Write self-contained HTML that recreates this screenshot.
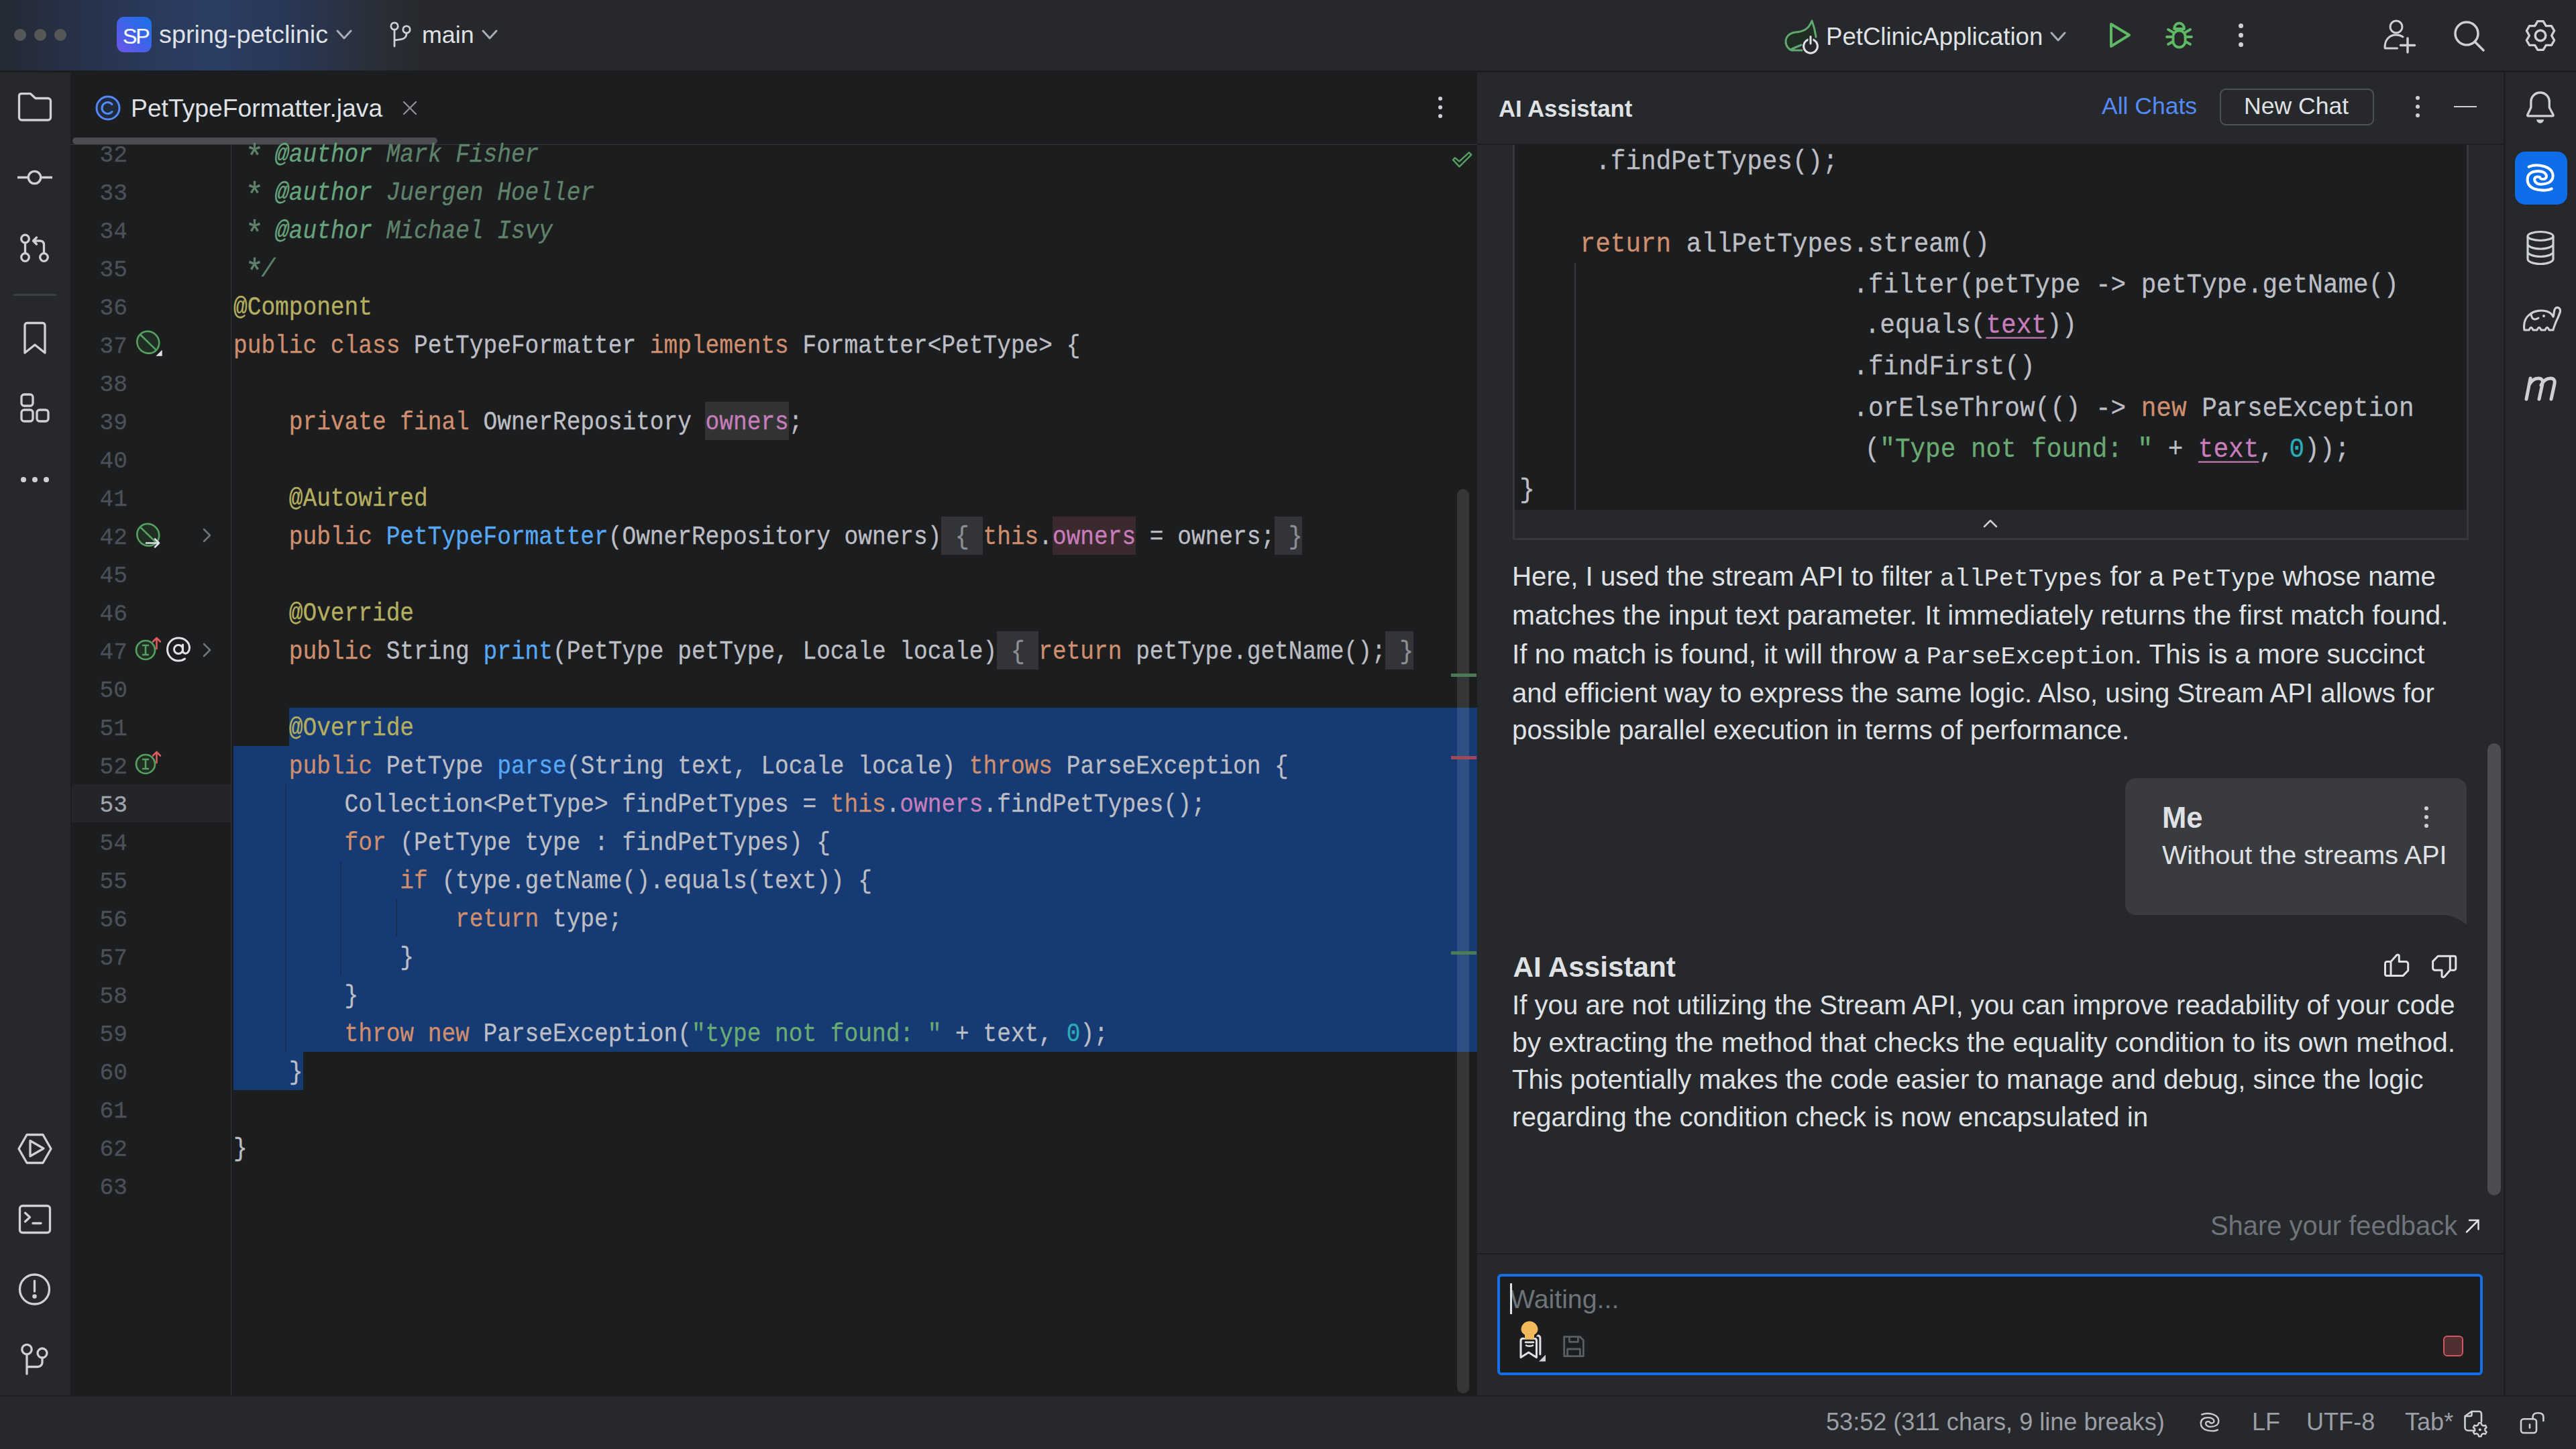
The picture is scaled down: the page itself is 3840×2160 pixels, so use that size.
<!DOCTYPE html><html><head><meta charset="utf-8"><style>html,body{margin:0;padding:0;}body{width:3840px;height:2160px;overflow:hidden;position:relative;background:#1C1D1F;}</style></head><body>
<div style="position:absolute;left:0px;top:0px;width:3840px;height:105px;background:#27282B;"></div>
<div style="position:absolute;left:0;top:0;width:700px;height:105px;background:linear-gradient(90deg, #242933 0px, #27324A 120px, #2A3B5E 250px, #2B3D62 330px, #293756 430px, #2A303C 540px, rgba(43,45,48,0) 640px);"></div>
<div style="position:absolute;left:0px;top:105px;width:3840px;height:3px;background:#1C1D1F;"></div>
<div style="position:absolute;left:21px;top:43px;width:18px;height:18px;border-radius:9px;background:#565758"></div>
<div style="position:absolute;left:51px;top:43px;width:18px;height:18px;border-radius:9px;background:#565758"></div>
<div style="position:absolute;left:81px;top:43px;width:18px;height:18px;border-radius:9px;background:#565758"></div>
<div style="position:absolute;left:174px;top:25px;width:52px;height:53px;border-radius:11px;background:linear-gradient(45deg,#6E55E6 0%,#3F63EA 50%,#1A72E8 100%);"></div>
<div style="position:absolute;left:183.00px;top:37.54px;font-family:'Liberation Sans', sans-serif;font-size:32.2px;line-height:32.2px;color:#FFFFFF;font-weight:400;white-space:pre;letter-spacing:-2.2px;-webkit-text-stroke:0.2px #fff;">SP</div>
<div style="position:absolute;left:237.00px;top:33.19px;font-family:'Liberation Sans', sans-serif;font-size:37.8px;line-height:37.8px;color:#DFE1E5;font-weight:400;white-space:pre;">spring-petclinic</div>
<svg style="position:absolute;left:500.0px;top:42.5px;" width="26" height="17" viewBox="0 0 26 17" fill="none"><polyline points="3,3 13.0,14 23,3" stroke="#A8ADB5" stroke-width="3" stroke-linecap="round" stroke-linejoin="round"/></svg>
<svg style="position:absolute;left:717.0px;top:42.5px;" width="26" height="17" viewBox="0 0 26 17" fill="none"><polyline points="3,3 13.0,14 23,3" stroke="#A8ADB5" stroke-width="3" stroke-linecap="round" stroke-linejoin="round"/></svg>
<svg style="position:absolute;left:580px;top:31px;" width="36" height="42" viewBox="0 0 36 42" fill="none"><circle cx="8" cy="8" r="5.2" stroke="#CED0D6" stroke-width="2.8"/><circle cx="26" cy="13" r="5.2" stroke="#CED0D6" stroke-width="2.8"/><path d="M8 13.5 V38 M26 18.5 C26 27 20 28 8 29" stroke="#CED0D6" stroke-width="2.8" stroke-linecap="round"/></svg>
<div style="position:absolute;left:629.00px;top:34.89px;font-family:'Liberation Sans', sans-serif;font-size:35.8px;line-height:35.8px;color:#DFE1E5;font-weight:400;white-space:pre;">main</div>
<svg style="position:absolute;left:2650px;top:20px;" width="70" height="70" viewBox="0 0 70 70" fill="none"><path d="M51 11 C46 24 38 27 27 28 C17 29 12 35 12 42 C12 49 17 54 21 55 L36 55 L22 51 L35 46 L51 40 C54 38 56 36 57 35 C56 27 54 19 51 11 Z" fill="#1F2D22"/><path d="M51 11 C46 24 38 27 27 28 C17 29 12 35 12 42 C12 49 17 54 21 55 L36 55 M21 53 L35 47 M51 11 C54 19 56 27 57 35" stroke="#5FA870" stroke-width="3" stroke-linecap="round" stroke-linejoin="round"/><circle cx="49" cy="48.8" r="10.4" stroke="#DFE1E5" stroke-width="3"/><path d="M49 34 V45" stroke="#27282B" stroke-width="7"/><path d="M49 34.5 V45" stroke="#DFE1E5" stroke-width="3" stroke-linecap="round"/></svg>
<div style="position:absolute;left:2722.00px;top:36.51px;font-family:'Liberation Sans', sans-serif;font-size:36.6px;line-height:36.6px;color:#DFE1E5;font-weight:400;white-space:pre;">PetClinicApplication</div>
<svg style="position:absolute;left:3055.0px;top:45.5px;" width="26" height="17" viewBox="0 0 26 17" fill="none"><polyline points="3,3 13.0,14 23,3" stroke="#A8ADB5" stroke-width="3" stroke-linecap="round" stroke-linejoin="round"/></svg>
<svg style="position:absolute;left:3130px;top:20px;" width="60" height="64" viewBox="0 0 60 64" fill="none"><path d="M17 16 L44 32.3 L17 49 Z" stroke="#5FB865" stroke-width="4" stroke-linejoin="round"/></svg>
<svg style="position:absolute;left:3220px;top:20px;" width="60" height="64" viewBox="0 0 60 64" fill="none"><path d="M21 23 C21 18 24.5 14.5 28.5 14.5 C32.5 14.5 36 18 36 23 Z" stroke="#5FB865" stroke-width="3.8" stroke-linejoin="round"/><rect x="19.5" y="25.5" width="18" height="25" rx="9" stroke="#5FB865" stroke-width="3.8"/><path d="M12 24 L19 28 M10 35 H18 M12 46 L19 42 M45 24 L38 28 M47 35 H39 M45 46 L38 42" stroke="#5FB865" stroke-width="3.8" stroke-linecap="round"/></svg>
<div style="position:absolute;left:3336.5px;top:34.5px;width:7.0px;height:7.0px;border-radius:3.5px;background:#CED0D6"></div>
<div style="position:absolute;left:3336.5px;top:48.5px;width:7.0px;height:7.0px;border-radius:3.5px;background:#CED0D6"></div>
<div style="position:absolute;left:3336.5px;top:63.0px;width:7.0px;height:7.0px;border-radius:3.5px;background:#CED0D6"></div>
<svg style="position:absolute;left:3552px;top:27px;" width="52" height="56" viewBox="0 0 52 56" fill="none"><circle cx="20" cy="13" r="9" stroke="#CED0D6" stroke-width="3"/><path d="M3 44 C3 32 10 25 20 25 C24 25 27 26 30 28" stroke="#CED0D6" stroke-width="3" stroke-linecap="round"/><path d="M3.5 45 H21.5" stroke="#CED0D6" stroke-width="3" stroke-linecap="round"/><path d="M37 30 V51 M26.5 40.6 H47.5" stroke="#CED0D6" stroke-width="3.5" stroke-linecap="round"/></svg>
<svg style="position:absolute;left:3656px;top:29px;" width="52" height="52" viewBox="0 0 52 52" fill="none"><circle cx="21" cy="21" r="17" stroke="#CED0D6" stroke-width="3.5"/><path d="M33 33 L46 46" stroke="#CED0D6" stroke-width="3.5" stroke-linecap="round"/></svg>
<svg style="position:absolute;left:3761.6px;top:27.8px;" width="50" height="50" viewBox="0 0 50 50" fill="none"><path d="M16.70 10.62 L20.84 3.60 L29.16 3.60 L33.30 10.62 L41.45 10.70 L45.61 17.90 L41.60 25.00 L45.61 32.10 L41.45 39.30 L33.30 39.38 L29.16 46.40 L20.84 46.40 L16.70 39.38 L8.55 39.30 L4.39 32.10 L8.40 25.00 L4.39 17.90 L8.55 10.70 Z" stroke="#CED0D6" stroke-width="3.3" stroke-linejoin="round"/><circle cx="25" cy="25" r="7.8" stroke="#CED0D6" stroke-width="3.5"/></svg>
<div style="position:absolute;left:0px;top:108px;width:105px;height:1972px;background:#27282B;"></div>
<div style="position:absolute;left:3732px;top:108px;width:3px;height:1972px;background:#1C1D1F;"></div>
<div style="position:absolute;left:3735px;top:108px;width:105px;height:1972px;background:#27282B;"></div>
<div style="position:absolute;left:0px;top:2080px;width:3840px;height:2px;background:#1C1D1F;"></div>
<div style="position:absolute;left:0px;top:2082px;width:3840px;height:78px;background:#27282B;"></div>
<div style="position:absolute;left:105px;top:108px;width:2097px;height:1972px;background:#1C1D1F;"></div>
<svg style="position:absolute;left:140px;top:140px;" width="42" height="42" viewBox="0 0 42 42" fill="none"><circle cx="21" cy="21" r="17" stroke="#548AF7" stroke-width="3" fill="#1F2A3D"/><path d="M27 15.5 A8.5 8.5 0 1 0 27 26.5" stroke="#548AF7" stroke-width="3" stroke-linecap="round"/></svg>
<div style="position:absolute;left:195.00px;top:143.02px;font-family:'Liberation Sans', sans-serif;font-size:37.3px;line-height:37.3px;color:#DFE1E5;font-weight:400;white-space:pre;">PetTypeFormatter.java</div>
<svg style="position:absolute;left:598px;top:148px;" width="26" height="26" viewBox="0 0 26 26" fill="none"><path d="M4 4 L22 22 M22 4 L4 22" stroke="#8C8F94" stroke-width="2.4" stroke-linecap="round"/></svg>
<div style="position:absolute;left:2143.7px;top:143.7px;width:6.6px;height:6.6px;border-radius:3.3px;background:#CED0D6"></div>
<div style="position:absolute;left:2143.7px;top:156.7px;width:6.6px;height:6.6px;border-radius:3.3px;background:#CED0D6"></div>
<div style="position:absolute;left:2143.7px;top:169.7px;width:6.6px;height:6.6px;border-radius:3.3px;background:#CED0D6"></div>
<div style="position:absolute;left:105px;top:215px;width:2097px;height:1px;background:#34363B;"></div>
<div style="position:absolute;left:108px;top:205px;width:544px;height:10px;border-radius:5px;background:#4A4C51"></div>
<svg style="position:absolute;left:2140px;top:210px;" width="80" height="50" viewBox="0 0 80 50" fill="none"><path d="M28.8 25.2 L35.4 30.7 L49.9 17.3 L53.3 20.6 L35.5 38.3 L26 28.3 Z" stroke="#55A060" stroke-width="2.4" stroke-linejoin="round"/></svg>
<div style="position:absolute;left:344px;top:216px;width:1px;height:1864px;background:#313337;"></div>
<div style="position:absolute;left:107px;top:1168.5px;width:237px;height:57px;background:#242529;"></div>
<div style="position:absolute;left:430.76px;top:1054.5px;width:1771.24px;height:57px;background:#153A74;"></div>
<div style="position:absolute;left:348px;top:1111.5px;width:1854px;height:456px;background:#153A74;"></div>
<div style="position:absolute;left:348px;top:1567.5px;width:103.5px;height:57px;background:#153A74;"></div>
<div style="position:absolute;left:425px;top:1168.5px;width:2px;height:399px;background:#1A2F57;"></div>
<div style="position:absolute;left:507px;top:1282.5px;width:2px;height:171px;background:#1A2F57;"></div>
<div style="position:absolute;left:590px;top:1339.5px;width:2px;height:57px;background:#1A2F57;"></div>
<div style="position:absolute;left:1403.19px;top:769.5px;width:62.07000000000001px;height:57px;background:#333438;"></div>
<div style="position:absolute;left:1899.75px;top:769.5px;width:41.38px;height:57px;background:#333438;"></div>
<div style="position:absolute;left:1568.71px;top:769.5px;width:124.14000000000001px;height:57px;background:#3A2A2E;"></div>
<div style="position:absolute;left:1051.46px;top:598.5px;width:124.14000000000001px;height:57px;background:#323434;"></div>
<div style="position:absolute;left:1485.95px;top:940.5px;width:62.07000000000001px;height:57px;background:#333438;"></div>
<div style="position:absolute;left:2065.2700000000004px;top:940.5px;width:41.38px;height:57px;background:#333438;"></div>
<div style="position:absolute;left:148.62px;top:214.88px;font-family:'Liberation Mono', monospace;font-size:34.49px;line-height:34.49px;color:#4B5059;font-weight:400;white-space:pre;-webkit-text-stroke:0.3px;">32</div>
<div style="position:absolute;left:148.62px;top:271.88px;font-family:'Liberation Mono', monospace;font-size:34.49px;line-height:34.49px;color:#4B5059;font-weight:400;white-space:pre;-webkit-text-stroke:0.3px;">33</div>
<div style="position:absolute;left:148.62px;top:328.88px;font-family:'Liberation Mono', monospace;font-size:34.49px;line-height:34.49px;color:#4B5059;font-weight:400;white-space:pre;-webkit-text-stroke:0.3px;">34</div>
<div style="position:absolute;left:148.62px;top:385.88px;font-family:'Liberation Mono', monospace;font-size:34.49px;line-height:34.49px;color:#4B5059;font-weight:400;white-space:pre;-webkit-text-stroke:0.3px;">35</div>
<div style="position:absolute;left:148.62px;top:442.88px;font-family:'Liberation Mono', monospace;font-size:34.49px;line-height:34.49px;color:#4B5059;font-weight:400;white-space:pre;-webkit-text-stroke:0.3px;">36</div>
<div style="position:absolute;left:148.62px;top:499.88px;font-family:'Liberation Mono', monospace;font-size:34.49px;line-height:34.49px;color:#4B5059;font-weight:400;white-space:pre;-webkit-text-stroke:0.3px;">37</div>
<div style="position:absolute;left:148.62px;top:556.88px;font-family:'Liberation Mono', monospace;font-size:34.49px;line-height:34.49px;color:#4B5059;font-weight:400;white-space:pre;-webkit-text-stroke:0.3px;">38</div>
<div style="position:absolute;left:148.62px;top:613.88px;font-family:'Liberation Mono', monospace;font-size:34.49px;line-height:34.49px;color:#4B5059;font-weight:400;white-space:pre;-webkit-text-stroke:0.3px;">39</div>
<div style="position:absolute;left:148.62px;top:670.88px;font-family:'Liberation Mono', monospace;font-size:34.49px;line-height:34.49px;color:#4B5059;font-weight:400;white-space:pre;-webkit-text-stroke:0.3px;">40</div>
<div style="position:absolute;left:148.62px;top:727.88px;font-family:'Liberation Mono', monospace;font-size:34.49px;line-height:34.49px;color:#4B5059;font-weight:400;white-space:pre;-webkit-text-stroke:0.3px;">41</div>
<div style="position:absolute;left:148.62px;top:784.88px;font-family:'Liberation Mono', monospace;font-size:34.49px;line-height:34.49px;color:#4B5059;font-weight:400;white-space:pre;-webkit-text-stroke:0.3px;">42</div>
<div style="position:absolute;left:148.62px;top:841.88px;font-family:'Liberation Mono', monospace;font-size:34.49px;line-height:34.49px;color:#4B5059;font-weight:400;white-space:pre;-webkit-text-stroke:0.3px;">45</div>
<div style="position:absolute;left:148.62px;top:898.88px;font-family:'Liberation Mono', monospace;font-size:34.49px;line-height:34.49px;color:#4B5059;font-weight:400;white-space:pre;-webkit-text-stroke:0.3px;">46</div>
<div style="position:absolute;left:148.62px;top:955.88px;font-family:'Liberation Mono', monospace;font-size:34.49px;line-height:34.49px;color:#4B5059;font-weight:400;white-space:pre;-webkit-text-stroke:0.3px;">47</div>
<div style="position:absolute;left:148.62px;top:1012.88px;font-family:'Liberation Mono', monospace;font-size:34.49px;line-height:34.49px;color:#4B5059;font-weight:400;white-space:pre;-webkit-text-stroke:0.3px;">50</div>
<div style="position:absolute;left:148.62px;top:1069.88px;font-family:'Liberation Mono', monospace;font-size:34.49px;line-height:34.49px;color:#4B5059;font-weight:400;white-space:pre;-webkit-text-stroke:0.3px;">51</div>
<div style="position:absolute;left:148.62px;top:1126.88px;font-family:'Liberation Mono', monospace;font-size:34.49px;line-height:34.49px;color:#4B5059;font-weight:400;white-space:pre;-webkit-text-stroke:0.3px;">52</div>
<div style="position:absolute;left:148.62px;top:1183.88px;font-family:'Liberation Mono', monospace;font-size:34.49px;line-height:34.49px;color:#A1A3AB;font-weight:400;white-space:pre;-webkit-text-stroke:0.3px;">53</div>
<div style="position:absolute;left:148.62px;top:1240.88px;font-family:'Liberation Mono', monospace;font-size:34.49px;line-height:34.49px;color:#4B5059;font-weight:400;white-space:pre;-webkit-text-stroke:0.3px;">54</div>
<div style="position:absolute;left:148.62px;top:1297.88px;font-family:'Liberation Mono', monospace;font-size:34.49px;line-height:34.49px;color:#4B5059;font-weight:400;white-space:pre;-webkit-text-stroke:0.3px;">55</div>
<div style="position:absolute;left:148.62px;top:1354.88px;font-family:'Liberation Mono', monospace;font-size:34.49px;line-height:34.49px;color:#4B5059;font-weight:400;white-space:pre;-webkit-text-stroke:0.3px;">56</div>
<div style="position:absolute;left:148.62px;top:1411.88px;font-family:'Liberation Mono', monospace;font-size:34.49px;line-height:34.49px;color:#4B5059;font-weight:400;white-space:pre;-webkit-text-stroke:0.3px;">57</div>
<div style="position:absolute;left:148.62px;top:1468.88px;font-family:'Liberation Mono', monospace;font-size:34.49px;line-height:34.49px;color:#4B5059;font-weight:400;white-space:pre;-webkit-text-stroke:0.3px;">58</div>
<div style="position:absolute;left:148.62px;top:1525.88px;font-family:'Liberation Mono', monospace;font-size:34.49px;line-height:34.49px;color:#4B5059;font-weight:400;white-space:pre;-webkit-text-stroke:0.3px;">59</div>
<div style="position:absolute;left:148.62px;top:1582.88px;font-family:'Liberation Mono', monospace;font-size:34.49px;line-height:34.49px;color:#4B5059;font-weight:400;white-space:pre;-webkit-text-stroke:0.3px;">60</div>
<div style="position:absolute;left:148.62px;top:1639.88px;font-family:'Liberation Mono', monospace;font-size:34.49px;line-height:34.49px;color:#4B5059;font-weight:400;white-space:pre;-webkit-text-stroke:0.3px;">61</div>
<div style="position:absolute;left:148.62px;top:1696.88px;font-family:'Liberation Mono', monospace;font-size:34.49px;line-height:34.49px;color:#4B5059;font-weight:400;white-space:pre;-webkit-text-stroke:0.3px;">62</div>
<div style="position:absolute;left:148.62px;top:1753.88px;font-family:'Liberation Mono', monospace;font-size:34.49px;line-height:34.49px;color:#4B5059;font-weight:400;white-space:pre;-webkit-text-stroke:0.3px;">63</div>
<div style="position:absolute;left:348.00px;top:214.88px;font-family:'Liberation Mono', monospace;font-size:34.49px;line-height:34.49px;color:#BCBEC4;font-weight:400;white-space:pre;-webkit-text-stroke:0.3px;transform:scaleY(1.1);transform-origin:0 26.42px;"><span style="color:#5F826B;"> </span><span style="color:#5F826B;display:inline-block;transform:translateY(6px) scale(1.35);">*</span><span style="color:#5F826B;"> </span><span style="color:#67A37C;font-style:italic;">@author</span><span style="color:#5F826B;font-style:italic;"> Mark Fisher</span></div>
<div style="position:absolute;left:348.00px;top:271.88px;font-family:'Liberation Mono', monospace;font-size:34.49px;line-height:34.49px;color:#BCBEC4;font-weight:400;white-space:pre;-webkit-text-stroke:0.3px;transform:scaleY(1.1);transform-origin:0 26.42px;"><span style="color:#5F826B;"> </span><span style="color:#5F826B;display:inline-block;transform:translateY(6px) scale(1.35);">*</span><span style="color:#5F826B;"> </span><span style="color:#67A37C;font-style:italic;">@author</span><span style="color:#5F826B;font-style:italic;"> Juergen Hoeller</span></div>
<div style="position:absolute;left:348.00px;top:328.88px;font-family:'Liberation Mono', monospace;font-size:34.49px;line-height:34.49px;color:#BCBEC4;font-weight:400;white-space:pre;-webkit-text-stroke:0.3px;transform:scaleY(1.1);transform-origin:0 26.42px;"><span style="color:#5F826B;"> </span><span style="color:#5F826B;display:inline-block;transform:translateY(6px) scale(1.35);">*</span><span style="color:#5F826B;"> </span><span style="color:#67A37C;font-style:italic;">@author</span><span style="color:#5F826B;font-style:italic;"> Michael Isvy</span></div>
<div style="position:absolute;left:348.00px;top:385.88px;font-family:'Liberation Mono', monospace;font-size:34.49px;line-height:34.49px;color:#BCBEC4;font-weight:400;white-space:pre;-webkit-text-stroke:0.3px;transform:scaleY(1.1);transform-origin:0 26.42px;"><span style="color:#5F826B;"> </span><span style="color:#5F826B;display:inline-block;transform:translateY(6px) scale(1.35);">*</span><span style="color:#5F826B;font-style:italic;">/</span></div>
<div style="position:absolute;left:348.00px;top:442.88px;font-family:'Liberation Mono', monospace;font-size:34.49px;line-height:34.49px;color:#BCBEC4;font-weight:400;white-space:pre;-webkit-text-stroke:0.3px;transform:scaleY(1.1);transform-origin:0 26.42px;"><span style="color:#B3AE60;">@Component</span></div>
<div style="position:absolute;left:348.00px;top:499.88px;font-family:'Liberation Mono', monospace;font-size:34.49px;line-height:34.49px;color:#BCBEC4;font-weight:400;white-space:pre;-webkit-text-stroke:0.3px;transform:scaleY(1.1);transform-origin:0 26.42px;"><span style="color:#CF8E6D;">public class </span><span style="color:#BCBEC4;">PetTypeFormatter </span><span style="color:#CF8E6D;">implements </span><span style="color:#BCBEC4;">Formatter&lt;PetType&gt; {</span></div>
<div style="position:absolute;left:348.00px;top:613.88px;font-family:'Liberation Mono', monospace;font-size:34.49px;line-height:34.49px;color:#BCBEC4;font-weight:400;white-space:pre;-webkit-text-stroke:0.3px;transform:scaleY(1.1);transform-origin:0 26.42px;"><span style="color:#CF8E6D;">    private final </span><span style="color:#BCBEC4;">OwnerRepository </span><span style="color:#C77DBB;">owners</span><span style="color:#BCBEC4;">;</span></div>
<div style="position:absolute;left:348.00px;top:727.88px;font-family:'Liberation Mono', monospace;font-size:34.49px;line-height:34.49px;color:#BCBEC4;font-weight:400;white-space:pre;-webkit-text-stroke:0.3px;transform:scaleY(1.1);transform-origin:0 26.42px;"><span style="color:#B3AE60;">    @Autowired</span></div>
<div style="position:absolute;left:348.00px;top:784.88px;font-family:'Liberation Mono', monospace;font-size:34.49px;line-height:34.49px;color:#BCBEC4;font-weight:400;white-space:pre;-webkit-text-stroke:0.3px;transform:scaleY(1.1);transform-origin:0 26.42px;"><span style="color:#CF8E6D;">    public </span><span style="color:#56A8F5;">PetTypeFormatter</span><span style="color:#BCBEC4;">(OwnerRepository owners) </span><span style="color:#8C8F94;">{ </span><span style="color:#CF8E6D;">this</span><span style="color:#BCBEC4;">.</span><span style="color:#C77DBB;">owners</span><span style="color:#BCBEC4;"> = owners;</span><span style="color:#8C8F94;"> }</span></div>
<div style="position:absolute;left:348.00px;top:898.88px;font-family:'Liberation Mono', monospace;font-size:34.49px;line-height:34.49px;color:#BCBEC4;font-weight:400;white-space:pre;-webkit-text-stroke:0.3px;transform:scaleY(1.1);transform-origin:0 26.42px;"><span style="color:#B3AE60;">    @Override</span></div>
<div style="position:absolute;left:348.00px;top:955.88px;font-family:'Liberation Mono', monospace;font-size:34.49px;line-height:34.49px;color:#BCBEC4;font-weight:400;white-space:pre;-webkit-text-stroke:0.3px;transform:scaleY(1.1);transform-origin:0 26.42px;"><span style="color:#CF8E6D;">    public </span><span style="color:#BCBEC4;">String </span><span style="color:#56A8F5;">print</span><span style="color:#BCBEC4;">(PetType petType, Locale locale) </span><span style="color:#8C8F94;">{ </span><span style="color:#CF8E6D;">return </span><span style="color:#BCBEC4;">petType.getName();</span><span style="color:#8C8F94;"> }</span></div>
<div style="position:absolute;left:348.00px;top:1069.88px;font-family:'Liberation Mono', monospace;font-size:34.49px;line-height:34.49px;color:#BCBEC4;font-weight:400;white-space:pre;-webkit-text-stroke:0.3px;transform:scaleY(1.1);transform-origin:0 26.42px;"><span style="color:#B3AE60;">    @Override</span></div>
<div style="position:absolute;left:348.00px;top:1126.88px;font-family:'Liberation Mono', monospace;font-size:34.49px;line-height:34.49px;color:#BCBEC4;font-weight:400;white-space:pre;-webkit-text-stroke:0.3px;transform:scaleY(1.1);transform-origin:0 26.42px;"><span style="color:#CF8E6D;">    public </span><span style="color:#BCBEC4;">PetType </span><span style="color:#56A8F5;">parse</span><span style="color:#BCBEC4;">(String text, Locale locale) </span><span style="color:#CF8E6D;">throws </span><span style="color:#BCBEC4;">ParseException {</span></div>
<div style="position:absolute;left:348.00px;top:1183.88px;font-family:'Liberation Mono', monospace;font-size:34.49px;line-height:34.49px;color:#BCBEC4;font-weight:400;white-space:pre;-webkit-text-stroke:0.3px;transform:scaleY(1.1);transform-origin:0 26.42px;"><span style="color:#BCBEC4;">        Collection&lt;PetType&gt; findPetTypes = </span><span style="color:#CF8E6D;">this</span><span style="color:#BCBEC4;">.</span><span style="color:#C77DBB;">owners</span><span style="color:#BCBEC4;">.findPetTypes();</span></div>
<div style="position:absolute;left:348.00px;top:1240.88px;font-family:'Liberation Mono', monospace;font-size:34.49px;line-height:34.49px;color:#BCBEC4;font-weight:400;white-space:pre;-webkit-text-stroke:0.3px;transform:scaleY(1.1);transform-origin:0 26.42px;"><span style="color:#CF8E6D;">        for </span><span style="color:#BCBEC4;">(PetType type : findPetTypes) {</span></div>
<div style="position:absolute;left:348.00px;top:1297.88px;font-family:'Liberation Mono', monospace;font-size:34.49px;line-height:34.49px;color:#BCBEC4;font-weight:400;white-space:pre;-webkit-text-stroke:0.3px;transform:scaleY(1.1);transform-origin:0 26.42px;"><span style="color:#CF8E6D;">            if </span><span style="color:#BCBEC4;">(type.getName().equals(text)) {</span></div>
<div style="position:absolute;left:348.00px;top:1354.88px;font-family:'Liberation Mono', monospace;font-size:34.49px;line-height:34.49px;color:#BCBEC4;font-weight:400;white-space:pre;-webkit-text-stroke:0.3px;transform:scaleY(1.1);transform-origin:0 26.42px;"><span style="color:#CF8E6D;">                return </span><span style="color:#BCBEC4;">type;</span></div>
<div style="position:absolute;left:348.00px;top:1411.88px;font-family:'Liberation Mono', monospace;font-size:34.49px;line-height:34.49px;color:#BCBEC4;font-weight:400;white-space:pre;-webkit-text-stroke:0.3px;transform:scaleY(1.1);transform-origin:0 26.42px;"><span style="color:#BCBEC4;">            }</span></div>
<div style="position:absolute;left:348.00px;top:1468.88px;font-family:'Liberation Mono', monospace;font-size:34.49px;line-height:34.49px;color:#BCBEC4;font-weight:400;white-space:pre;-webkit-text-stroke:0.3px;transform:scaleY(1.1);transform-origin:0 26.42px;"><span style="color:#BCBEC4;">        }</span></div>
<div style="position:absolute;left:348.00px;top:1525.88px;font-family:'Liberation Mono', monospace;font-size:34.49px;line-height:34.49px;color:#BCBEC4;font-weight:400;white-space:pre;-webkit-text-stroke:0.3px;transform:scaleY(1.1);transform-origin:0 26.42px;"><span style="color:#CF8E6D;">        throw new </span><span style="color:#BCBEC4;">ParseException(</span><span style="color:#6AAB73;">"type not found: "</span><span style="color:#BCBEC4;"> + text, </span><span style="color:#2AACB8;">0</span><span style="color:#BCBEC4;">);</span></div>
<div style="position:absolute;left:348.00px;top:1582.88px;font-family:'Liberation Mono', monospace;font-size:34.49px;line-height:34.49px;color:#BCBEC4;font-weight:400;white-space:pre;-webkit-text-stroke:0.3px;transform:scaleY(1.1);transform-origin:0 26.42px;"><span style="color:#BCBEC4;">    }</span></div>
<div style="position:absolute;left:348.00px;top:1696.88px;font-family:'Liberation Mono', monospace;font-size:34.49px;line-height:34.49px;color:#BCBEC4;font-weight:400;white-space:pre;-webkit-text-stroke:0.3px;transform:scaleY(1.1);transform-origin:0 26.42px;"><span style="color:#BCBEC4;">}</span></div>
<div style="position:absolute;left:2172px;top:729px;width:18px;height:1348px;border-radius:9px;background:rgba(255,255,255,0.115)"></div>
<div style="position:absolute;left:2163px;top:1004px;width:38px;height:5px;background:#4C7A54;"></div>
<div style="position:absolute;left:2163px;top:1127px;width:38px;height:5px;background:#A0475A;"></div>
<div style="position:absolute;left:2163px;top:1418px;width:38px;height:5px;background:#4C7A54;"></div>
<div style="position:absolute;left:2202px;top:108px;width:1530px;height:1972px;background:#27282B;"></div>
<div style="position:absolute;left:2255px;top:150px;width:1419px;height:649px;border:3px solid #36383C;background:#1C1D1F;"></div>
<div style="position:absolute;left:2258px;top:760px;width:1419px;height:42px;background:#27282B;"></div>
<div style="position:absolute;left:2202px;top:108px;width:1530px;height:106px;background:#27282B;"></div>
<div style="position:absolute;left:2202px;top:214px;width:1530px;height:2px;background:#1C1D1F;"></div>
<div style="position:absolute;left:2234.00px;top:144.62px;font-family:'Liberation Sans', sans-serif;font-size:34.7px;line-height:34.7px;color:#DFE1E5;font-weight:700;white-space:pre;">AI Assistant</div>
<div style="position:absolute;left:3133.00px;top:140.94px;font-family:'Liberation Sans', sans-serif;font-size:35.5px;line-height:35.5px;color:#548AF7;font-weight:400;white-space:pre;">All Chats</div>
<div style="position:absolute;left:3309px;top:132px;width:226px;height:51px;border:2px solid #4E5157;border-radius:9px;"></div>
<div style="position:absolute;left:3345.00px;top:140.86px;font-family:'Liberation Sans', sans-serif;font-size:35.6px;line-height:35.6px;color:#DFE1E5;font-weight:400;white-space:pre;">New Chat</div>
<div style="position:absolute;left:3600.8px;top:142.8px;width:6.4px;height:6.4px;border-radius:3.2px;background:#CED0D6"></div>
<div style="position:absolute;left:3600.8px;top:155.8px;width:6.4px;height:6.4px;border-radius:3.2px;background:#CED0D6"></div>
<div style="position:absolute;left:3600.8px;top:168.8px;width:6.4px;height:6.4px;border-radius:3.2px;background:#CED0D6"></div>
<div style="position:absolute;left:3658px;top:157.7px;width:34px;height:2.8px;background:#CED0D6;"></div>
<div style="position:absolute;left:2347px;top:392px;width:2px;height:368px;background:#35373B;"></div>
<svg style="position:absolute;left:2955px;top:772px;" width="24" height="16" viewBox="0 0 24 16" fill="none"><polyline points="3,13 12,4 21,13" stroke="#CED0D6" stroke-width="2.5" stroke-linecap="round" stroke-linejoin="round"/></svg>
<div style="position:absolute;left:2378.20px;top:223.94px;font-family:'Liberation Mono', monospace;font-size:37.67px;line-height:37.67px;color:#BCBEC4;font-weight:400;white-space:pre;-webkit-text-stroke:0.3px;transform:scaleY(1.1);transform-origin:0 28.86px;"><span style="color:#BCBEC4;">.findPetTypes();</span></div>
<div style="position:absolute;left:2355.60px;top:346.64px;font-family:'Liberation Mono', monospace;font-size:37.67px;line-height:37.67px;color:#BCBEC4;font-weight:400;white-space:pre;-webkit-text-stroke:0.3px;transform:scaleY(1.1);transform-origin:0 28.86px;"><span style="color:#CF8E6D;">return </span><span style="color:#BCBEC4;">allPetTypes.stream()</span></div>
<div style="position:absolute;left:2762.40px;top:407.54px;font-family:'Liberation Mono', monospace;font-size:37.67px;line-height:37.67px;color:#BCBEC4;font-weight:400;white-space:pre;-webkit-text-stroke:0.3px;transform:scaleY(1.1);transform-origin:0 28.86px;"><span style="color:#BCBEC4;">.filter(petType -&gt; petType.getName()</span></div>
<div style="position:absolute;left:2779.70px;top:468.34px;font-family:'Liberation Mono', monospace;font-size:37.67px;line-height:37.67px;color:#BCBEC4;font-weight:400;white-space:pre;-webkit-text-stroke:0.3px;transform:scaleY(1.1);transform-origin:0 28.86px;"><span style="color:#BCBEC4;">.equals(</span><span style="color:#C77DBB;text-decoration:underline;text-decoration-thickness:2px;text-underline-offset:6px;">text</span><span style="color:#BCBEC4;">))</span></div>
<div style="position:absolute;left:2762.40px;top:530.14px;font-family:'Liberation Mono', monospace;font-size:37.67px;line-height:37.67px;color:#BCBEC4;font-weight:400;white-space:pre;-webkit-text-stroke:0.3px;transform:scaleY(1.1);transform-origin:0 28.86px;"><span style="color:#BCBEC4;">.findFirst()</span></div>
<div style="position:absolute;left:2762.40px;top:591.54px;font-family:'Liberation Mono', monospace;font-size:37.67px;line-height:37.67px;color:#BCBEC4;font-weight:400;white-space:pre;-webkit-text-stroke:0.3px;transform:scaleY(1.1);transform-origin:0 28.86px;"><span style="color:#BCBEC4;">.orElseThrow(() -&gt; </span><span style="color:#CF8E6D;">new </span><span style="color:#BCBEC4;">ParseException</span></div>
<div style="position:absolute;left:2779.70px;top:653.44px;font-family:'Liberation Mono', monospace;font-size:37.67px;line-height:37.67px;color:#BCBEC4;font-weight:400;white-space:pre;-webkit-text-stroke:0.3px;transform:scaleY(1.1);transform-origin:0 28.86px;"><span style="color:#BCBEC4;">(</span><span style="color:#6AAB73;">"Type not found: "</span><span style="color:#BCBEC4;"> + </span><span style="color:#C77DBB;text-decoration:underline;text-decoration-thickness:2px;text-underline-offset:6px;">text</span><span style="color:#BCBEC4;">, </span><span style="color:#2AACB8;">0</span><span style="color:#BCBEC4;">));</span></div>
<div style="position:absolute;left:2265.20px;top:714.44px;font-family:'Liberation Mono', monospace;font-size:37.67px;line-height:37.67px;color:#BCBEC4;font-weight:400;white-space:pre;-webkit-text-stroke:0.3px;transform:scaleY(1.1);transform-origin:0 28.86px;"><span style="color:#BCBEC4;">}</span></div>
<div style="position:absolute;left:2253.50px;top:839.98px;font-family:'Liberation Sans', sans-serif;font-size:40.3px;line-height:40.3px;color:#DFE1E5;font-weight:400;white-space:pre;transform:scaleX(0.9989);transform-origin:0 0;">Here, I used the stream API to filter <span style="font-family:'Liberation Mono', monospace;font-size:36.8px;">allPetTypes</span> for a <span style="font-family:'Liberation Mono', monospace;font-size:36.8px;">PetType</span> whose name</div>
<div style="position:absolute;left:2253.50px;top:898.18px;font-family:'Liberation Sans', sans-serif;font-size:40.3px;line-height:40.3px;color:#DFE1E5;font-weight:400;white-space:pre;transform:scaleX(1.0098);transform-origin:0 0;">matches the input text parameter. It immediately returns the first match found.</div>
<div style="position:absolute;left:2253.50px;top:955.68px;font-family:'Liberation Sans', sans-serif;font-size:40.3px;line-height:40.3px;color:#DFE1E5;font-weight:400;white-space:pre;transform:scaleX(1.003);transform-origin:0 0;">If no match is found, it will throw a <span style="font-family:'Liberation Mono', monospace;font-size:36.8px;">ParseException</span>. This is a more succinct</div>
<div style="position:absolute;left:2253.50px;top:1013.68px;font-family:'Liberation Sans', sans-serif;font-size:40.3px;line-height:40.3px;color:#DFE1E5;font-weight:400;white-space:pre;transform:scaleX(0.9953);transform-origin:0 0;">and efficient way to express the same logic. Also, using Stream API allows for</div>
<div style="position:absolute;left:2253.50px;top:1069.18px;font-family:'Liberation Sans', sans-serif;font-size:40.3px;line-height:40.3px;color:#DFE1E5;font-weight:400;white-space:pre;transform:scaleX(0.9995);transform-origin:0 0;">possible parallel execution in terms of performance.</div>
<div style="position:absolute;left:3168px;top:1160px;width:509px;height:204px;border-radius:16px 16px 0 16px;background:#3A3B3F"></div>
<svg style="position:absolute;left:3630px;top:1350px;" width="48" height="30" viewBox="0 0 48 30" fill="none"><path d="M0 0 H47 V28 C40 24 30 14 10 14 Z" fill="#3A3B3F"/></svg>
<div style="position:absolute;left:3223.00px;top:1197.68px;font-family:'Liberation Sans', sans-serif;font-size:43.6px;line-height:43.6px;color:#DFE1E5;font-weight:700;white-space:pre;">Me</div>
<div style="position:absolute;left:3223.00px;top:1255.47px;font-family:'Liberation Sans', sans-serif;font-size:39.6px;line-height:39.6px;color:#DFE1E5;font-weight:400;white-space:pre;">Without the streams API</div>
<div style="position:absolute;left:3613.6px;top:1202px;width:6px;height:6px;border-radius:3px;background:#CED0D6"></div>
<div style="position:absolute;left:3613.6px;top:1215px;width:6px;height:6px;border-radius:3px;background:#CED0D6"></div>
<div style="position:absolute;left:3613.6px;top:1228px;width:6px;height:6px;border-radius:3px;background:#CED0D6"></div>
<div style="position:absolute;left:2255.50px;top:1421.27px;font-family:'Liberation Sans', sans-serif;font-size:42.2px;line-height:42.2px;color:#DFE1E5;font-weight:700;white-space:pre;">AI Assistant</div>
<svg style="position:absolute;left:3540px;top:1410px;" width="140" height="60" viewBox="0 0 140 60" fill="none"><path d="M24 44.6 H18 C16.5 44.6 15.5 43.5 15.5 42 V26.5 C15.5 25 16.5 23.6 18 23.6 H24 V44.6 M24 23.6 L32.5 14 C33.5 12.8 36.3 12.8 36.3 15.5 V23.6 H46.5 C48.3 23.6 49.7 25 49.7 26.8 V36.8 L42 44.6 H24" stroke="#DFE1E5" stroke-width="3" stroke-linejoin="round"/></svg>
<svg style="position:absolute;left:3540px;top:1410px;" width="140" height="60" viewBox="0 0 140 60" fill="none"><g transform="rotate(180 33.1 28.6) translate(-70.1 -2.7)"><path d="M24 44.6 H18 C16.5 44.6 15.5 43.5 15.5 42 V26.5 C15.5 25 16.5 23.6 18 23.6 H24 V44.6 M24 23.6 L32.5 14 C33.5 12.8 36.3 12.8 36.3 15.5 V23.6 H46.5 C48.3 23.6 49.7 25 49.7 26.8 V36.8 L42 44.6 H24" stroke="#DFE1E5" stroke-width="3" stroke-linejoin="round"/></g></svg>
<div style="position:absolute;left:2253.50px;top:1478.25px;font-family:'Liberation Sans', sans-serif;font-size:40.1px;line-height:40.1px;color:#DFE1E5;font-weight:400;white-space:pre;transform:scaleX(1.0032);transform-origin:0 0;">If you are not utilizing the Stream API, you can improve readability of your code</div>
<div style="position:absolute;left:2253.50px;top:1533.85px;font-family:'Liberation Sans', sans-serif;font-size:40.1px;line-height:40.1px;color:#DFE1E5;font-weight:400;white-space:pre;transform:scaleX(1.0213);transform-origin:0 0;">by extracting the method that checks the equality condition to its own method.</div>
<div style="position:absolute;left:2253.50px;top:1589.05px;font-family:'Liberation Sans', sans-serif;font-size:40.1px;line-height:40.1px;color:#DFE1E5;font-weight:400;white-space:pre;transform:scaleX(0.9996);transform-origin:0 0;">This potentially makes the code easier to manage and debug, since the logic</div>
<div style="position:absolute;left:2253.50px;top:1644.75px;font-family:'Liberation Sans', sans-serif;font-size:40.1px;line-height:40.1px;color:#DFE1E5;font-weight:400;white-space:pre;transform:scaleX(1.0085);transform-origin:0 0;">regarding the condition check is now encapsulated in</div>
<div style="position:absolute;left:3708px;top:1108px;width:20px;height:674px;border-radius:10px;background:#4A4C50"></div>
<div style="position:absolute;left:3295.00px;top:1807.82px;font-family:'Liberation Sans', sans-serif;font-size:39.9px;line-height:39.9px;color:#6F737A;font-weight:400;white-space:pre;">Share your feedback</div>
<svg style="position:absolute;left:3671px;top:1813px;" width="30" height="30" viewBox="0 0 30 30" fill="none"><path d="M6 23.5 L23.5 6 M10 6 H23.5 V19.5" stroke="#DFE1E5" stroke-width="2.5" stroke-linecap="round" stroke-linejoin="miter"/></svg>
<div style="position:absolute;left:2202px;top:1868px;width:1530px;height:2px;background:#1C1D1F;"></div>
<div style="position:absolute;left:2231.7px;top:1898.9px;width:1461.2px;height:142.8px;border:4.4px solid #136FEA;border-radius:6px;background:#1C1D1F"></div>
<div style="position:absolute;left:2251.00px;top:1916.72px;font-family:'Liberation Sans', sans-serif;font-size:39.3px;line-height:39.3px;color:#6F737A;font-weight:400;white-space:pre;">Waiting...</div>
<div style="position:absolute;left:2251px;top:1913px;width:2.5px;height:46px;background:#DFE1E5;"></div>
<svg style="position:absolute;left:2240px;top:1960px;" width="140" height="80" viewBox="0 0 140 80" fill="none"><path d="M27 63.5 V38.5 C27 36.5 28.5 35.3 30.5 35.3 H47 C49 35.3 50.5 36.5 50.5 38.5 V63.5 L38.7 56 Z" stroke="#DFE1E5" stroke-width="3" stroke-linejoin="round"/><path d="M50.5 31 H52.5 C54.5 31 55.9 32.5 55.9 34.5 V58.8" stroke="#DFE1E5" stroke-width="3" stroke-linecap="round"/><circle cx="40" cy="22.1" r="14.2" fill="#1C1D1F"/><path d="M33 30 C30 28 27.5 25 27.5 22 C27.5 15 33 9.5 40 9.5 C47 9.5 52.5 15 52.5 22 C52.5 25 50 28 47 30 V36.5 H33 Z" fill="#F4B95A"/><path d="M34 40.9 H46 M35 45.5 C37 47 43 47 45 45.5" stroke="#DFE1E5" stroke-width="2.6" stroke-linecap="round"/><path d="M64 59.4 V69.6 H54.1 Z" fill="#CED0D6"/><path d="M91.7 32.6 H115 L120.4 38 V61.6 H91.7 Z M99.4 32.6 V40.3 H112.4 V32.6 M96.6 61.6 V51 H115.4 V61.6" stroke="#5A5D63" stroke-width="2.8" stroke-linejoin="round"/></svg>
<div style="position:absolute;left:3641.6px;top:1991.4px;width:26.4px;height:26.3px;border:2.5px solid #D4555D;border-radius:6px;background:#4F2F31"></div>
<svg style="position:absolute;left:3740px;top:110px;" width="100" height="90" viewBox="0 0 100 90" fill="none"><path d="M32.9 50.3 V41.7 A13.7 13.7 0 0 1 60.3 41.7 V50.3 L66 61 C66.6 62 66 62.8 65 62.8 H28.8 C27.8 62.8 27.2 62 27.8 61 Z" stroke="#CED0D6" stroke-width="3.3" stroke-linejoin="round"/><path d="M41.1 68.2 A5.5 5.5 0 0 0 52.1 68.2 Z" fill="#CED0D6"/></svg>
<div style="position:absolute;left:3748.5px;top:226px;width:78px;height:79px;border-radius:15px;background:#0E6DE9"></div>
<svg style="position:absolute;left:3764.9px;top:241.6px;" width="43.3" height="45.9" viewBox="0 0 43.3 45.9" fill="none"><svg viewBox="380 330 660 700" width="100%" height="100%"><path d="M450 430 C650 350 1000 420 1000 640 C1000 800 820 830 720 830 C620 830 580 760 580 720 C580 660 640 650 700 665 M970 930 C850 990 420 1000 420 720 C420 560 560 530 660 530 C800 530 860 600 850 660 C840 720 760 720 720 700" stroke="#FFFFFF" stroke-width="62" stroke-linecap="round" fill="none"/></svg></svg>
<svg style="position:absolute;left:3760px;top:340px;" width="54" height="60" viewBox="0 0 54 60" fill="none"><ellipse cx="27" cy="12" rx="19" ry="6.5" stroke="#CED0D6" stroke-width="3.2"/><path d="M8 12 V46 C8 50 16 53.5 27 53.5 C38 53.5 46 50 46 46 V12 M8 23.5 C8 27.5 16 31 27 31 C38 31 46 27.5 46 23.5 M8 35 C8 39 16 42.5 27 42.5 C38 42.5 46 39 46 35" stroke="#CED0D6" stroke-width="3.2"/></svg>
<svg style="position:absolute;left:3756px;top:450px;" width="62" height="50" viewBox="0 0 62 50" fill="none"><path d="M7 42 C5 30 10 22 16 18 C22 13 32 12 40 14 C44 15 48 18 50 22 C52 18 50 12 54 9 C58 7 62 11 60 16 C58 22 56 26 54 30 C52 36 50 40 50 42 H44 C42 37 40 37 38 42 H32 C30 37 28 37 26 42 H20 C18 37 16 37 14 42 Z" stroke="#CED0D6" stroke-width="3.2" stroke-linejoin="round"/><path d="M17 18 C18 26 22 28 28 24" stroke="#CED0D6" stroke-width="3" stroke-linecap="round"/><circle cx="36" cy="21" r="2" fill="#CED0D6"/></svg>
<svg style="position:absolute;left:3756px;top:556px;" width="62" height="46" viewBox="0 0 62 46" fill="none"><path d="M10 39 L16 8 M14 18 C18 10 24 8 28 8 C33 8 35 11 34 16 L29 39 M32 18 C36 10 42 8 46 8 C51 8 53 11 52 16 L47 39" stroke="#CED0D6" stroke-width="5" stroke-linecap="round" stroke-linejoin="round"/></svg>
<svg style="position:absolute;left:26.0px;top:133.0px;" width="52" height="52" viewBox="0 0 52 52" fill="none"><path d="M2.5 10 C2.5 8 4 6.7 6 6.7 H19.5 L26.8 13.5 H45.5 C47.8 13.5 49.5 15.2 49.5 17.5 V42 C49.5 44.3 47.8 46 45.5 46 H6.5 C4.3 46 2.5 44.3 2.5 42 Z" stroke="#CED0D6" stroke-width="3.3" stroke-linecap="round" stroke-linejoin="round"/></svg>
<svg style="position:absolute;left:26.0px;top:238.0px;" width="52" height="52" viewBox="0 0 52 52" fill="none"><circle cx="25.5" cy="26.5" r="9.2" stroke="#CED0D6" stroke-width="3.3" stroke-linecap="round" stroke-linejoin="round"/><path d="M0.5 26.5 H16 M35 26.5 H51" stroke="#CED0D6" stroke-width="3.3" stroke-linecap="round" stroke-linejoin="round"/></svg>
<svg style="position:absolute;left:26.0px;top:343.0px;" width="52" height="52" viewBox="0 0 52 52" fill="none"><circle cx="11.5" cy="13" r="5.8" stroke="#CED0D6" stroke-width="3.3" stroke-linecap="round" stroke-linejoin="round"/><circle cx="11.5" cy="40.5" r="5.8" stroke="#CED0D6" stroke-width="3.3" stroke-linecap="round" stroke-linejoin="round"/><circle cx="39.5" cy="40.5" r="5.8" stroke="#CED0D6" stroke-width="3.3" stroke-linecap="round" stroke-linejoin="round"/><path d="M11.5 19 V34.5 M39.5 34.5 V22 C39.5 18 37 16 33 16 H24 M28.5 11 L23.5 16 L28.5 21" stroke="#CED0D6" stroke-width="3.3" stroke-linecap="round" stroke-linejoin="round"/></svg>
<div style="position:absolute;left:20px;top:438px;width:64px;height:3px;background:#3C3F44;"></div>
<svg style="position:absolute;left:26.0px;top:478.0px;" width="52" height="52" viewBox="0 0 52 52" fill="none"><path d="M11 7 C11 5 12.5 3.5 14.5 3.5 H37.5 C39.5 3.5 41 5 41 7 V48 L26 36 L11 48 Z" stroke="#CED0D6" stroke-width="3.3" stroke-linecap="round" stroke-linejoin="round"/></svg>
<svg style="position:absolute;left:26.0px;top:583.0px;" width="52" height="52" viewBox="0 0 52 52" fill="none"><rect x="6" y="5" width="17" height="17" rx="4" stroke="#CED0D6" stroke-width="3.3" stroke-linecap="round" stroke-linejoin="round"/><rect x="6" y="28" width="17" height="17" rx="4" stroke="#CED0D6" stroke-width="3.3" stroke-linecap="round" stroke-linejoin="round"/><rect x="29" y="28" width="17" height="17" rx="4" stroke="#CED0D6" stroke-width="3.3" stroke-linecap="round" stroke-linejoin="round"/></svg>
<div style="position:absolute;left:30.5px;top:711px;width:8px;height:8px;border-radius:4px;background:#CED0D6"></div>
<div style="position:absolute;left:47.5px;top:711px;width:8px;height:8px;border-radius:4px;background:#CED0D6"></div>
<div style="position:absolute;left:64.5px;top:711px;width:8px;height:8px;border-radius:4px;background:#CED0D6"></div>
<svg style="position:absolute;left:26.0px;top:1685.0px;" width="52" height="52" viewBox="0 0 52 52" fill="none"><path d="M14 6.5 H38 L50 27.5 L38 48.5 H14 L2 27.5 Z" stroke="#CED0D6" stroke-width="3.3" stroke-linecap="round" stroke-linejoin="round"/><path d="M19 15.5 L39 27 L19 38.5 Z" stroke="#CED0D6" stroke-width="3.3" stroke-linecap="round" stroke-linejoin="round"/></svg>
<svg style="position:absolute;left:26.0px;top:1791.0px;" width="52" height="52" viewBox="0 0 52 52" fill="none"><rect x="3.5" y="6.5" width="45" height="40" rx="4" stroke="#CED0D6" stroke-width="3.3" stroke-linecap="round" stroke-linejoin="round"/><path d="M11.5 17 L18.5 23.5 L11.5 30 M23 32.5 H35" stroke="#CED0D6" stroke-width="3.3" stroke-linecap="round" stroke-linejoin="round"/></svg>
<svg style="position:absolute;left:26.0px;top:1895.0px;" width="52" height="52" viewBox="0 0 52 52" fill="none"><circle cx="25.5" cy="27" r="22" stroke="#CED0D6" stroke-width="3.3" stroke-linecap="round" stroke-linejoin="round"/><path d="M25.5 14.5 V30" stroke="#CED0D6" stroke-width="3.3" stroke-linecap="round" stroke-linejoin="round"/><circle cx="25.5" cy="37.5" r="1.6" fill="#CED0D6" stroke="#CED0D6" stroke-width="3.3" stroke-linecap="round" stroke-linejoin="round"/></svg>
<svg style="position:absolute;left:26.0px;top:1998.0px;" width="52" height="52" viewBox="0 0 52 52" fill="none"><circle cx="14" cy="13.5" r="7.2" stroke="#CED0D6" stroke-width="3.3" stroke-linecap="round" stroke-linejoin="round"/><circle cx="37" cy="19" r="7" stroke="#CED0D6" stroke-width="3.3" stroke-linecap="round" stroke-linejoin="round"/><path d="M14 20.8 V50 M14 39.5 H30 C34 39.5 37 36.5 37 32.5 V26" stroke="#CED0D6" stroke-width="3.3" stroke-linecap="round" stroke-linejoin="round"/></svg>
<div style="position:absolute;left:2722.00px;top:2102.43px;font-family:'Liberation Sans', sans-serif;font-size:36.1px;line-height:36.1px;color:#9C9EA5;font-weight:400;white-space:pre;">53:52 (311 chars, 9 line breaks)</div>
<svg style="position:absolute;left:3277px;top:2104px;" width="34" height="32" viewBox="0 0 34 32" fill="none"><svg viewBox="380 330 660 700" width="100%" height="100%"><path d="M450 430 C650 350 1000 420 1000 640 C1000 800 820 830 720 830 C620 830 580 760 580 720 C580 660 640 650 700 665 M970 930 C850 990 420 1000 420 720 C420 560 560 530 660 530 C800 530 860 600 850 660 C840 720 760 720 720 700" stroke="#C9CBD0" stroke-width="52" stroke-linecap="round" fill="none"/></svg></svg>
<div style="position:absolute;left:3357.00px;top:2102.43px;font-family:'Liberation Sans', sans-serif;font-size:36.1px;line-height:36.1px;color:#9C9EA5;font-weight:400;white-space:pre;">LF</div>
<div style="position:absolute;left:3438.00px;top:2102.43px;font-family:'Liberation Sans', sans-serif;font-size:36.1px;line-height:36.1px;color:#9C9EA5;font-weight:400;white-space:pre;">UTF-8</div>
<div style="position:absolute;left:3585.00px;top:2102.43px;font-family:'Liberation Sans', sans-serif;font-size:36.1px;line-height:36.1px;color:#9C9EA5;font-weight:400;white-space:pre;">Tab*</div>
<svg style="position:absolute;left:3660px;top:2095px;" width="60" height="60" viewBox="0 0 60 60" fill="none"><path d="M28.5 37.5 H19 C16.5 37.5 14.5 35.5 14.5 33 V16 L24.5 9 H35.5 C37.5 9 39 10.5 39 12.5 V24" stroke="#CED0D6" stroke-width="2.6" stroke-linejoin="round" stroke-linecap="round"/><path d="M14.5 16 H22.5 C23.7 16 24.5 15.2 24.5 14 V9" stroke="#CED0D6" stroke-width="2.6" stroke-linejoin="round"/><g transform="translate(36.8 36.2)"><path d="M-1.8 -9.5 H1.8 L2.6 -6.6 L5.2 -5.1 L8.1 -6 L9.9 -2.9 L7.6 -0.9 V2 L9.9 4 L8.1 7.1 L5.2 6.2 L2.6 7.7 L1.8 10.6 H-1.8 L-2.6 7.7 L-5.2 6.2 L-8.1 7.1 L-9.9 4 L-7.6 2 V-0.9 L-9.9 -2.9 L-8.1 -6 L-5.2 -5.1 L-2.6 -6.6 Z" transform="translate(0 -0.55)" stroke="#CED0D6" stroke-width="2.4" stroke-linejoin="round" fill="#27282B"/><circle cx="0" cy="0" r="2" fill="#CED0D6"/></g></svg>
<svg style="position:absolute;left:3750px;top:2100px;" width="50" height="44" viewBox="0 0 50 44" fill="none"><rect x="8" y="15.2" width="23" height="20.8" rx="4" stroke="#CED0D6" stroke-width="2.6"/><path d="M25.6 15.2 V12 C25.6 8.5 28.4 6.2 33.5 6.2 C38.6 6.2 41.4 8.5 41.4 12 V18" stroke="#CED0D6" stroke-width="2.6" stroke-linecap="round"/><path d="M21 23.5 V28.5" stroke="#CED0D6" stroke-width="2.6" stroke-linecap="round"/></svg>
<svg style="position:absolute;left:200.0px;top:490.0px;" width="46" height="46" viewBox="0 0 46 46" fill="none"><ellipse cx="20.8" cy="20.3" rx="16.8" ry="16" transform="rotate(42 20.8 20.3)" stroke="#55A060" stroke-width="2.7" fill="#1F2D22"/><path d="M8.6 8.2 L33.4 32.4" stroke="#55A060" stroke-width="2.7"/><path d="M41.7 31.4 V40.8 H32.4 Z" fill="#DFE1E5"/></svg>
<svg style="position:absolute;left:200.2px;top:776.7px;" width="46" height="46" viewBox="0 0 46 46" fill="none"><ellipse cx="20.8" cy="20.3" rx="16.8" ry="16" transform="rotate(42 20.8 20.3)" stroke="#55A060" stroke-width="2.7" fill="#1F2D22"/><path d="M8.6 8.2 L33.4 32.4" stroke="#55A060" stroke-width="2.7"/><path d="M18 32.5 H37 M31 26.5 L37 32.5 L31 38.5" stroke="#DFE1E5" stroke-width="2.6" stroke-linecap="round" stroke-linejoin="round"/></svg>
<svg style="position:absolute;left:201px;top:943px;" width="44" height="44" viewBox="0 0 44 44" fill="none"><circle cx="16" cy="26" r="14" stroke="#55A060" stroke-width="2.7" fill="#1F2D22"/><path d="M11 19 H21 M16 19 V33 M11 33 H21" stroke="#55A060" stroke-width="2.6"/><path d="M32.5 24 V8 M27 13.5 L32.5 8 L38 13.5" stroke="#DB5C5C" stroke-width="2.6" stroke-linecap="round" stroke-linejoin="round"/></svg>
<svg style="position:absolute;left:201px;top:1113px;" width="44" height="44" viewBox="0 0 44 44" fill="none"><circle cx="16" cy="26" r="14" stroke="#55A060" stroke-width="2.7" fill="#1F2D22"/><path d="M11 19 H21 M16 19 V33 M11 33 H21" stroke="#55A060" stroke-width="2.6"/><path d="M32.5 24 V8 M27 13.5 L32.5 8 L38 13.5" stroke="#DB5C5C" stroke-width="2.6" stroke-linecap="round" stroke-linejoin="round"/></svg>
<svg style="position:absolute;left:246px;top:948px;" width="42" height="42" viewBox="0 0 42 42" fill="none"><circle cx="20" cy="20" r="6.5" stroke="#DFE1E5" stroke-width="3"/><path d="M26.5 13 V22 C26.5 26 31 27.5 34 24.5 C36 22 36.5 20 36.5 18 C36.5 9 29 3 20 3 C10.5 3 3.5 10.5 3.5 20 C3.5 29.5 10.5 37 20 37 C24 37 27 36 29.5 34" stroke="#DFE1E5" stroke-width="3" stroke-linecap="round"/></svg>
<svg style="position:absolute;left:301px;top:786px;" width="16" height="24" viewBox="0 0 16 24" fill="none"><polyline points="3,3 12,12 3,21" stroke="#6F737A" stroke-width="2.6" stroke-linecap="round" stroke-linejoin="round"/></svg>
<svg style="position:absolute;left:301px;top:957px;" width="16" height="24" viewBox="0 0 16 24" fill="none"><polyline points="3,3 12,12 3,21" stroke="#6F737A" stroke-width="2.6" stroke-linecap="round" stroke-linejoin="round"/></svg>
</body></html>
